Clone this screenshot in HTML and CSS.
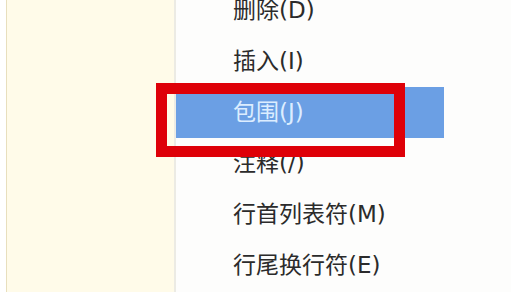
FILE: index.html
```html
<!DOCTYPE html>
<html lang="zh-CN">
<head>
<meta charset="utf-8">
<title>菜单</title>
<link rel="stylesheet" href="styles.css">
</head>
<body>
<div class="screen">
  <div class="sidebar"></div>
  <div class="menu">
    <div class="item">删除(D)</div>
    <div class="item">插入(I)</div>
    <div class="item active">包围(J)</div>
    <div class="item">注释(/)</div>
    <div class="item">行首列表符(M)</div>
    <div class="item">行尾换行符(E)</div>
  </div>
  <div class="callout"></div>
</div>
</body>
</html>
```

FILE: styles.css
```css
html, body {
  margin: 0;
  padding: 0;
  background: #ffffff;
}

.screen {
  position: relative;
  width: 511px;
  height: 292px;
  display: flex;
  overflow: hidden;
  background: #ffffff;
}

.sidebar {
  margin-left: 6px;
  width: 167px;
  border-left: 1px solid #e8dfbd;
  border-right: 2px solid #ecebe4;
  background: #fffbe9;
}

.menu {
  flex: 1;
  margin-top: -15px;
  background: #fdfdfc;
  font-family: "DejaVu Sans", "Noto Sans CJK SC", sans-serif;
  font-size: 23px;
  color: #2b2b2b;
}

.item {
  width: 268px;
  height: 51px;
  line-height: 51px;
  padding-left: 57px;
  box-sizing: border-box;
  white-space: nowrap;
}

.item.active {
  background: #6b9fe4;
  color: #dcedff;
}

.callout {
  position: absolute;
  left: 156px;
  top: 83px;
  width: 249px;
  height: 74px;
  box-sizing: border-box;
  border: 11px solid #de0008;
}
```
